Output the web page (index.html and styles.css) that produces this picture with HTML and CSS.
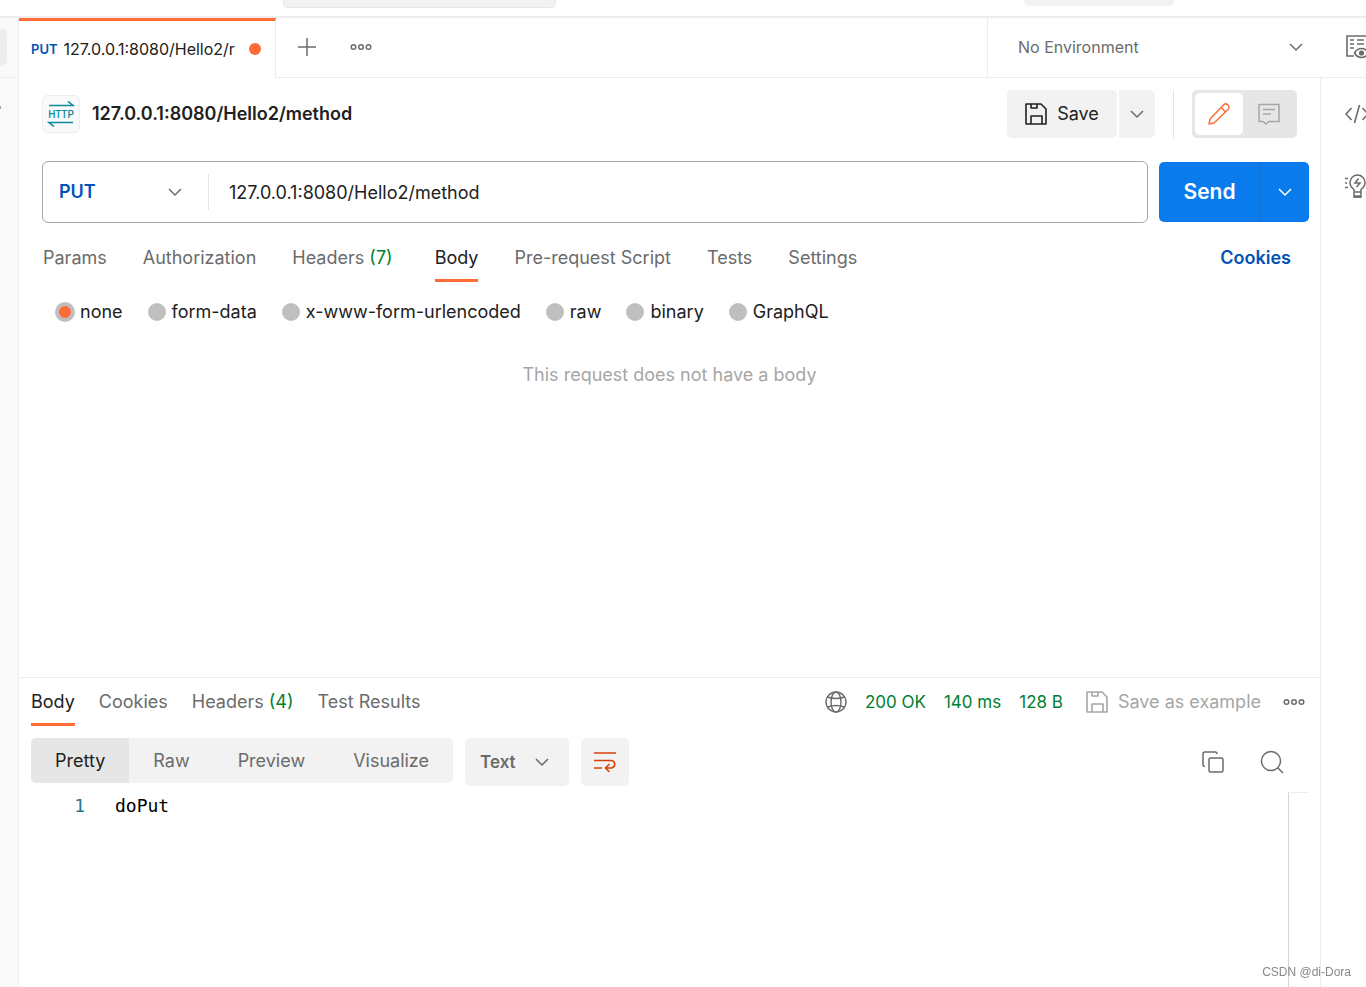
FILE: index.html
```
<!DOCTYPE html>
<html lang="en">
<head>
    <meta charset="UTF-8">
    <meta name="viewport" content="width=device-width, initial-scale=1.0">
    <title>127.0.0.1:8080/Hello2/method</title>

    <link rel="stylesheet" href="styles.css">
</head>
<body>

    <!-- shared icons -->
    <svg class="sprite" aria-hidden="true">
        <symbol id="chevron" viewBox="0 0 14 14">
            <path d="M1 4l6 6 6-6" fill="none" stroke="currentColor" stroke-width="1.5"/>
        </symbol>
        <symbol id="dots" viewBox="0 0 22 8">
            <g fill="none" stroke="currentColor" stroke-width="1.5">
                <circle cx="3.5" cy="4" r="2.3"/>
                <circle cx="11" cy="4" r="2.3"/>
                <circle cx="18.5" cy="4" r="2.3"/>
            </g>
        </symbol>
        <symbol id="floppy" viewBox="0 0 22 22">
            <path d="M1 1h15l5 5v15H1zM6 1v4h6V1M6 21v-8h11v8" fill="none" stroke="currentColor" stroke-width="1.6" stroke-linejoin="round"/>
        </symbol>
    </svg>

    <header class="topbar">
        <div class="search-box"></div>
        <div class="account-box"></div>
    </header>

    <div class="app">

        <aside class="sidebar">
            <div class="sidebar-head"><span class="sidebar-btn"></span></div>
            <span class="sidebar-dot"></span>
        </aside>

        <div class="workspace">

            <nav class="tabbar">
                <a class="file-tab" href="#">
                    <span class="verb">PUT</span>
                    <span class="file-name">127.0.0.1:8080/Hello2/r</span>
                    <span class="unsaved"></span>
                </a>
                <div class="tab-actions">
                    <button class="icon-btn" aria-label="New tab">
                        <svg width="18" height="18" viewBox="0 0 18 18"><path d="M9 0v18M0 9h18" stroke="currentColor" stroke-width="1.5"/></svg>
                    </button>
                    <button class="icon-btn" aria-label="Tab options">
                        <svg width="22" height="8"><use href="#dots"/></svg>
                    </button>
                </div>
                <div class="environment">
                    <div class="select env-select">
                        <select aria-label="Environment">
                            <option>No Environment</option>
                        </select>
                        <svg width="14" height="14"><use href="#chevron"/></svg>
                    </div>
                    <button class="icon-btn" aria-label="Environment quick look">
                        <svg width="24" height="24" viewBox="0 0 24 24" fill="none" stroke="currentColor" stroke-width="1.6">
                            <path d="M8 21H1V1h20v10M4 5h4M11 5h7M4 9h4M11 9h7M4 13h4"/>
                            <path d="M8.5 18c3.5-6 10.5-6 14 0-3.5 6-10.5 6-14 0z"/>
                            <circle cx="15.5" cy="18" r="1.8" fill="currentColor"/>
                        </svg>
                    </button>
                </div>
            </nav>

            <div class="content">

                <main class="panes">

                    <section class="request">

                        <div class="request-head">
                            <span class="http-icon">
                                <svg width="28" height="26" viewBox="0 0 28 26">
                                    <path d="M2 4.5h24l-5-4M26 21.500H2l5 4" fill="none" stroke="currentColor" stroke-width="1.6"/>
                                    <text x="14" y="17" text-anchor="middle">HTTP</text>
                                </svg>
                            </span>
                            <h1>127.0.0.1:8080/Hello2/method</h1>
                            <div class="save-group">
                                <button class="save">
                                    <svg width="22" height="22"><use href="#floppy"/></svg>
                                    Save
                                </button>
                                <button class="save-more" aria-label="Save options">
                                    <svg width="14" height="14"><use href="#chevron"/></svg>
                                </button>
                            </div>
                            <div class="mode">
                                <button class="mode-btn active" aria-label="Edit">
                                    <svg width="22" height="22" viewBox="0 0 22 22" fill="none" stroke="currentColor" stroke-width="1.5" stroke-linejoin="round">
                                        <path d="M1 21l1-5L15.500 2a3 3 0 0 1 4.500 4.500L6 20zM13 4.500L17.500 9"/>
                                    </svg>
                                </button>
                                <button class="mode-btn" aria-label="Comments">
                                    <svg width="22" height="22" viewBox="0 0 22 22" fill="none" stroke="currentColor" stroke-width="1.5">
                                        <path d="M1 1.500h20v17H11l-3 2.500-3-2.500H1zM5 6.500h12M5 11h8"/>
                                    </svg>
                                </button>
                            </div>
                        </div>

                        <form class="url-row">
                            <div class="url-box">
                                <div class="select method-select">
                                    <select aria-label="Method">
                                        <option>PUT</option>
                                    </select>
                                    <svg width="14" height="14"><use href="#chevron"/></svg>
                                </div>
                                <input class="url" type="text" value="127.0.0.1:8080/Hello2/method" aria-label="Request URL">
                            </div>
                            <div class="send-group">
                                <button class="send" type="button">Send</button>
                                <button class="send-more" type="button" aria-label="Send options">
                                    <svg width="14" height="14"><use href="#chevron"/></svg>
                                </button>
                            </div>
                        </form>

                        <div class="request-tabs">
                            <button class="tab">Params</button>
                            <button class="tab">Authorization</button>
                            <button class="tab">Headers <span class="count">(7)</span></button>
                            <button class="tab active">Body</button>
                            <button class="tab">Pre-request Script</button>
                            <button class="tab">Tests</button>
                            <button class="tab">Settings</button>
                            <a class="cookies" href="#">Cookies</a>
                        </div>

                        <div class="body-types">
                            <label><input type="radio" name="body" checked>none</label>
                            <label><input type="radio" name="body">form-data</label>
                            <label><input type="radio" name="body">x-www-form-urlencoded</label>
                            <label><input type="radio" name="body">raw</label>
                            <label><input type="radio" name="body">binary</label>
                            <label><input type="radio" name="body">GraphQL</label>
                        </div>

                        <p class="empty">This request does not have a body</p>

                    </section>

                    <section class="response">

                        <div class="response-head">
                            <div class="response-tabs">
                                <button class="tab active">Body</button>
                                <button class="tab">Cookies</button>
                                <button class="tab">Headers <span class="count">(4)</span></button>
                                <button class="tab">Test Results</button>
                            </div>
                            <div class="status">
                                <svg class="globe" width="22" height="22" viewBox="0 0 22 22" fill="none" stroke="currentColor" stroke-width="1.4">
                                    <circle cx="11" cy="11" r="10"/>
                                    <ellipse cx="11" cy="11" rx="5" ry="10"/>
                                    <path d="M2.500 6c5 1.800 12 1.800 17 0M2.500 16c5-1.800 12-1.800 17 0"/>
                                </svg>
                                <span>200 OK</span>
                                <span>140 ms</span>
                                <span>128 B</span>
                            </div>
                            <button class="save-example">
                                <svg width="22" height="22"><use href="#floppy"/></svg>
                                Save as example
                            </button>
                            <button class="icon-btn" aria-label="Response options">
                                <svg width="22" height="8"><use href="#dots"/></svg>
                            </button>
                        </div>

                        <div class="view-bar">
                            <div class="views">
                                <button class="view active">Pretty</button>
                                <button class="view">Raw</button>
                                <button class="view">Preview</button>
                                <button class="view">Visualize</button>
                            </div>
                            <div class="select format-select">
                                <select aria-label="Format">
                                    <option>Text</option>
                                </select>
                                <svg width="14" height="14"><use href="#chevron"/></svg>
                            </div>
                            <button class="wrap" aria-label="Wrap lines">
                                <svg width="22" height="20" viewBox="0 0 22 20" fill="none" stroke="currentColor" stroke-width="1.6">
                                    <path d="M0 1h22M0 8.500h17.500a3.800 3.800 0 0 1 0 7.500H12M0 16h8M15.500 12L11.500 16l4 4"/>
                                </svg>
                            </button>
                            <div class="view-tools">
                                <button class="icon-btn" aria-label="Copy">
                                    <svg width="22" height="22" viewBox="0 0 22 22" fill="none" stroke="currentColor" stroke-width="1.5">
                                        <path d="M3 15.500a2 2 0 0 1-2-2V3a2 2 0 0 1 2-2h10a2 2 0 0 1 2 2"/>
                                        <rect x="7" y="7" width="14" height="14" rx="1.5"/>
                                    </svg>
                                </button>
                                <button class="icon-btn" aria-label="Search">
                                    <svg width="24" height="24" viewBox="0 0 24 24" fill="none" stroke="currentColor" stroke-width="1.5">
                                        <circle cx="11" cy="11" r="9.5"/>
                                        <path d="M17.500 17.500L23 23"/>
                                    </svg>
                                </button>
                            </div>
                        </div>

                        <div class="editor">
                            <span class="line-number">1</span>
                            <code>doPut</code>
                            <div class="minimap"></div>
                        </div>

                    </section>

                </main>

                <aside class="rail">
                    <button class="icon-btn" aria-label="Code snippet">
                        <svg width="26" height="20" viewBox="0 0 26 20" fill="none" stroke="currentColor" stroke-width="1.6">
                            <path d="M6.500 4L1 10l5.500 6M14.500 1l-5 18M17.500 4L23 10l-5.500 6"/>
                        </svg>
                    </button>
                    <button class="icon-btn" aria-label="Tips">
                        <svg width="22" height="26" viewBox="0 0 22 26" fill="none" stroke="currentColor" stroke-width="1.5">
                            <path d="M9 19v-2.500c-2-1.500-4-3.500-4-7a7.500 7.500 0 0 1 15 0c0 3.500-2 5.500-4 7V19zM9 19v5h7v-5"/>
                            <path d="M13.500 5.500L10 10h5l-3.500 4M0 5.500h3M0 10h2M0 14.500h3"/>
                            <path d="M9 23.500h7" stroke-width="2.5"/>
                        </svg>
                    </button>
                </aside>

            </div>
        </div>
    </div>

    <div class="watermark">CSDN @di-Dora</div>

</body>
</html>
```
FILE: styles.css
```
* {
    box-sizing: border-box;
}

body {
    margin: 0;
    min-height: 100vh;
    display: flex;
    flex-direction: column;
    overflow-x: hidden;
    background: #fff;
    color: #212121;
    font-family: Inter, sans-serif;
    font-size: 18px;
    line-height: 24px;
}

button,
input,
select {
    margin: 0;
    padding: 0;
    border: 0;
    background: none;
    color: inherit;
    font: inherit;
}

button {
    display: flex;
    align-items: center;
    justify-content: center;
}

a {
    text-decoration: none;
}

svg {
    display: block;
    flex: none;
}

.sprite {
    position: absolute;
    width: 0;
    height: 0;
}

.icon-btn {
    color: #6b6b6b;
}

/* drop-downs */

.select {
    position: relative;
    display: flex;
    align-items: center;
}

.select select {
    appearance: none;
    width: 100%;
    height: 100%;
}

.select svg {
    position: absolute;
    right: 20px;
    color: #6b6b6b;
    pointer-events: none;
}

/* top strip */

.topbar {
    flex: none;
    display: flex;
    align-items: flex-start;
    justify-content: space-between;
    height: 18px;
    padding: 0 192px 0 283px;
    border-bottom: 2px solid #ededed;
}

.search-box,
.account-box {
    width: 273px;
    height: 8px;
    background: #f2f2f2;
    border: 1px solid #e6e6e6;
    border-top: 0;
    border-radius: 0 0 5px 5px;
}

.account-box {
    width: 150px;
    height: 6px;
    border-color: #f2f2f2;
}

.app {
    flex: 1;
    display: flex;
}

.sidebar {
    flex: none;
    width: 19px;
    background: #f9f9f9;
    border-right: 1px solid #ededed;
}

.sidebar-head {
    display: flex;
    height: 60px;
    padding-top: 11px;
    border-bottom: 1px solid #ededed;
}

.sidebar-btn {
    width: 7px;
    height: 36px;
    background: #ededed;
    border-radius: 0 5px 5px 0;
}

.sidebar-dot {
    display: block;
    width: 1px;
    height: 3px;
    margin-top: 28px;
    background: #a6a6a6;
}

.workspace {
    flex: 1;
    min-width: 0;
    display: flex;
    flex-direction: column;
}

/* tab bar */

.tabbar {
    display: flex;
    height: 60px;
}

.file-tab {
    flex: none;
    display: flex;
    align-items: center;
    width: 257px;
    padding: 0 14px 2px 12px;
    border-top: 3px solid #ff6c37;
    border-right: 1px solid #ededed;
    color: #212121;
    font-size: 16px;
}

.verb {
    margin-right: 6px;
    color: #0053b8;
    font-size: 13px;
    font-weight: 600;
}

.file-name {
    flex: 1;
    overflow: hidden;
    white-space: nowrap;
}

.unsaved {
    width: 12px;
    height: 12px;
    margin-left: 9px;
    background: #ff6c37;
    border-radius: 50%;
}

.tab-actions {
    flex: 1;
    display: flex;
    align-items: center;
    gap: 34px;
    padding: 0 0 2px 22px;
    border-bottom: 1px solid #ededed;
}

.environment {
    flex: none;
    display: flex;
    width: 379px;
    padding-bottom: 1px;
    border-left: 1px solid #ededed;
    border-bottom: 1px solid #ededed;
    overflow: hidden;
}

.env-select {
    flex: none;
    width: 335px;
    color: #6b6b6b;
    font-size: 16px;
}

.env-select select {
    padding-left: 30px;
}

.environment .icon-btn {
    margin-left: 23px;
}

.content {
    flex: 1;
    display: flex;
}

.panes {
    flex: 1;
    min-width: 0;
    display: flex;
    flex-direction: column;
}

/* request pane */

.request {
    flex: 19;
    padding: 12px 11px 0 23px;
}

.request-head {
    display: flex;
    align-items: center;
    height: 48px;
    margin-right: 12px;
}

.http-icon {
    display: flex;
    align-items: center;
    justify-content: center;
    width: 38px;
    height: 38px;
    margin-right: 12px;
    background: #f9f9f9;
    border: 1px solid #ededed;
    border-radius: 6px;
    color: #0e8a9c;
}

.http-icon text {
    fill: currentColor;
    font-family: Roboto, sans-serif;
    font-size: 10px;
    font-weight: 500;
}

h1 {
    flex: 1;
    margin: 0;
    font-size: 18px;
    font-weight: 600;
}

.save-group {
    display: flex;
    gap: 2px;
    height: 48px;
    padding-right: 18px;
    box-sizing: content-box;
    border-right: 1px solid #e6e6e6;
}

.save {
    gap: 10px;
    width: 110px;
    background: #f2f2f2;
    border-radius: 5px;
}

.save-more {
    width: 36px;
    background: #f2f2f2;
    border-radius: 0 5px 5px 0;
    color: #6b6b6b;
}

.mode {
    display: flex;
    height: 48px;
    margin-left: 18px;
    padding: 3px;
    background: #e6e6e6;
    border-radius: 5px;
}

.mode-btn {
    width: 51px;
    color: #a6a6a6;
}

.mode-btn.active {
    width: 48px;
    background: #fff;
    border-radius: 5px;
    color: #ff6c37;
}

.url-row {
    display: flex;
    align-items: center;
    gap: 11px;
    margin-top: 23px;
}

.url-box {
    flex: 1;
    display: flex;
    align-items: center;
    height: 62px;
    border: 1px solid #a6a6a6;
    border-radius: 6px;
}

.method-select {
    width: 166px;
    height: 36px;
    border-right: 1px solid #e6e6e6;
    color: #0053b8;
    font-weight: 600;
}

.method-select select {
    padding-left: 16px;
}

.method-select svg {
    right: 26px;
}

.url {
    flex: 1;
    height: 100%;
    padding: 0 20px;
}

.send-group {
    display: flex;
    height: 60px;
    background: #097bed;
    border-radius: 5px;
    color: #fff;
}

.send {
    width: 101px;
    font-size: 21px;
    font-weight: 600;
}

.send-more {
    width: 49px;
    border-left: 1px solid #0b6fd3;
}

.tab {
    padding: 0 0 9px;
    border-bottom: 3px solid transparent;
    color: #6b6b6b;
    white-space: pre;
}

.tab.active {
    border-color: #ff6c37;
    color: #212121;
}

.count {
    color: #007f31;
}

.request-tabs {
    display: flex;
    gap: 36px;
    margin: 23px 0 0 1px;
}

.request-tabs .count {
    margin-right: 6px;
}

.cookies {
    margin: 0 18px 0 auto;
    color: #0053b8;
    font-weight: 600;
}

.body-types {
    display: flex;
    gap: 25px;
    margin: 18px 0 0 14px;
}

.body-types label {
    display: flex;
    align-items: center;
    gap: 6px;
}

.body-types input {
    appearance: none;
    width: 18px;
    height: 18px;
    background: #bfbfbf;
    border-radius: 50%;
}

.body-types input:checked {
    background: #ff6c37;
    border: 3px solid #bfbfbf;
    box-shadow: 0 0 0 1px #bfbfbf;
}

.empty {
    margin: 39px 12px 0 0;
    color: #a6a6a6;
    text-align: center;
}

/* response pane */

.response {
    flex: 10;
    display: flex;
    flex-direction: column;
    padding: 0 11px 0 12px;
    border-top: 1px solid #ededed;
}

.response-head {
    display: flex;
    align-items: center;
    height: 48px;
    margin-right: 4px;
}

.response-tabs {
    flex: 1;
    display: flex;
    gap: 24px;
    align-self: flex-end;
}

.status {
    display: flex;
    align-items: center;
    gap: 18px;
    color: #007f31;
    font-size: 17px;
}

.globe {
    color: #6b6b6b;
}

.save-example {
    gap: 10px;
    margin: 0 22px 0 23px;
    color: #a6a6a6;
}

.view-bar {
    display: flex;
    gap: 12px;
    margin-top: 12px;
}

.views {
    display: flex;
    height: 45px;
    background: #f2f2f2;
    border-radius: 5px;
    overflow: hidden;
}

.view {
    padding: 0 24px;
    color: #6b6b6b;
}

.view.active {
    background: #e6e6e6;
    color: #212121;
}

.format-select {
    width: 104px;
    height: 48px;
    background: #f2f2f2;
    border-radius: 5px;
    color: #6b6b6b;
    font-size: 17px;
    font-weight: 600;
}

.format-select select {
    padding-left: 15px;
}

.wrap {
    width: 48px;
    height: 48px;
    background: #f2f2f2;
    border-radius: 5px;
    color: #d9400b;
}

.view-tools {
    display: flex;
    gap: 36px;
    margin: 0 25px 0 auto;
}

.editor {
    flex: 1;
    display: flex;
    margin-top: 6px;
    font-family: "DejaVu Sans Mono", monospace;
    line-height: 27px;
}

.line-number {
    width: 54px;
    margin-right: 30px;
    color: #237893;
    text-align: right;
}

.editor code {
    flex: 1;
    color: #000;
    font-family: inherit;
}

.minimap {
    width: 21px;
    border-top: 1px solid #ededed;
    border-left: 1px solid #d4d4d4;
}

/* right rail */

.rail {
    flex: none;
    display: flex;
    flex-direction: column;
    align-items: flex-start;
    gap: 49px;
    width: 46px;
    padding: 26px 0 0 24px;
    border-left: 1px solid #ededed;
    overflow: hidden;
}

.watermark {
    position: fixed;
    right: 15px;
    bottom: 6px;
    color: #888;
    font-family: "Liberation Sans", sans-serif;
    font-size: 12px;
    line-height: 18px;
}
```
